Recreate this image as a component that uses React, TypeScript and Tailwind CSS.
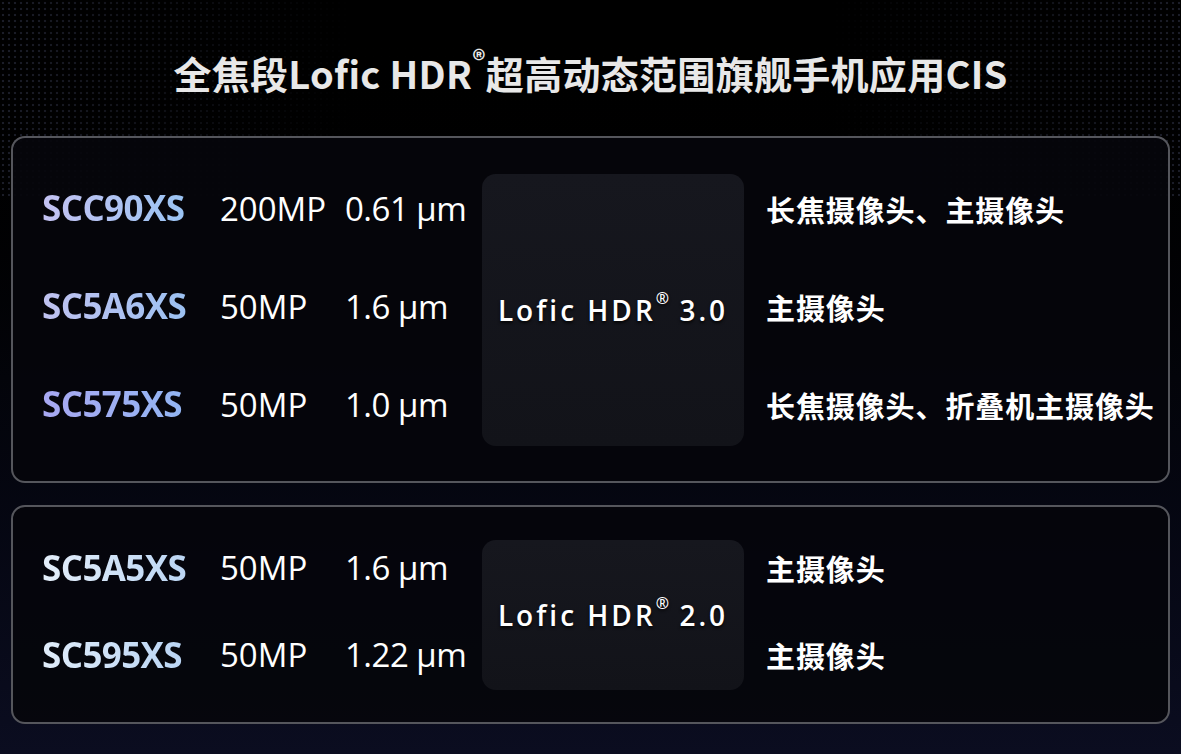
import React from "react";

type Sensor = {
  name: string;
  res: string;
  pixel: string;
  use: string;
  grad: string;
};

const lofic3: Sensor[] = [
  { name: "SCC90XS", res: "200MP", pixel: "0.61 μm", use: "长焦摄像头、主摄像头", grad: "from-[#c4c2f2] to-[#8ec4f4]" },
  { name: "SC5A6XS", res: "50MP", pixel: "1.6 μm", use: "主摄像头", grad: "from-[#c0c2f0] to-[#92c0f2]" },
  { name: "SC575XS", res: "50MP", pixel: "1.0 μm", use: "长焦摄像头、折叠机主摄像头", grad: "from-[#a8a8f2] to-[#8cb8f2]" },
];

const lofic2: Sensor[] = [
  { name: "SC5A5XS", res: "50MP", pixel: "1.6 μm", use: "主摄像头", grad: "from-[#e4eefa] to-[#b2d0f2]" },
  { name: "SC595XS", res: "50MP", pixel: "1.22 μm", use: "主摄像头", grad: "from-[#e0ecfa] to-[#b0cef2]" },
];

const latin = { fontFamily: '"Open Sans", "Noto Sans", sans-serif' };
const cjk = { fontFamily: '"Noto Sans CJK SC", "Noto Sans", sans-serif' };

const SensorCard = ({
  rows,
  label,
  rowH,
  boxH,
  cardH,
}: {
  rows: Sensor[];
  label: string;
  rowH: string;
  boxH: string;
  cardH: string;
}) => {
  return (
    <div className={`${cardH} rounded-[14px] border-2 border-[#55565c] bg-[#05060b]/90 pl-[29px] pr-3 flex items-center`}>
      {/* left: model / resolution / pixel size */}
      <div className="flex flex-col w-[440px] -mt-[6px]">
        {rows.map((r) => (
          <div key={r.name} className={`flex items-center ${rowH}`} style={latin}>
            <span
              className={`w-[178px] text-[35px] font-bold tracking-[-0.6px] bg-gradient-to-r ${r.grad} bg-clip-text text-transparent`}
            >
              {r.name}
            </span>
            <span className="w-[125px] text-[33px] text-white">{r.res}</span>
            <span className="text-[33px] text-white tracking-[-0.5px]">{r.pixel}</span>
          </div>
        ))}
      </div>

      {/* middle: Lofic HDR badge box */}
      <div
        className={`w-[262px] ${boxH} rounded-[14px] bg-gradient-to-b from-[#16171e] to-[#121319] flex items-center justify-center shrink-0`}
      >
        <span
          className="text-[28px] font-semibold text-white tracking-[3px] [text-shadow:0_2px_3px_rgba(0,0,0,0.8)]"
          style={latin}
        >
          Lofic HDR<sup className="text-[16px] align-[9px] tracking-normal">®</sup> {label}
        </span>
      </div>

      {/* right: usage */}
      <div className="flex flex-col pl-[22px] -mt-[4px]">
        {rows.map((r) => (
          <div key={r.name} className={`flex items-center ${rowH}`}>
            <span className="text-[29px] font-bold text-white tracking-[0.9px]" style={cjk}>
              {r.use}
            </span>
          </div>
        ))}
      </div>
    </div>
  );
};

export default function App() {
  return (
    <div className="relative w-[1181px] h-[754px] overflow-hidden bg-gradient-to-b from-[#000000] via-[#03040a] to-[#0b0d20]">
      {/* dotted texture in the top corners */}
      <div className="absolute inset-x-0 top-0 h-[200px] bg-[radial-gradient(circle,#1b1d28_1px,transparent_1.6px)] bg-[length:6px_6px] [mask-image:linear-gradient(to_right,black,transparent_30%,transparent_70%,black)]" />

      <div className="relative flex flex-col px-[11px]">
        <h1
          className="h-[136px] flex items-center justify-center pt-[8px] text-[38px] font-bold text-[#e8e8e8] tracking-[0.3px]"
          style={cjk}
        >
          全焦段Lofic HDR<sup className="text-[26px] align-[10px]">®</sup>超高动态范围旗舰手机应用CIS
        </h1>

        <div className="flex flex-col gap-[22px]">
          <SensorCard rows={lofic3} label="3.0" rowH="h-[98px]" boxH="h-[272px]" cardH="h-[347px]" />
          <SensorCard rows={lofic2} label="2.0" rowH="h-[87px]" boxH="h-[150px]" cardH="h-[219px]" />
        </div>
      </div>
    </div>
  );
}
